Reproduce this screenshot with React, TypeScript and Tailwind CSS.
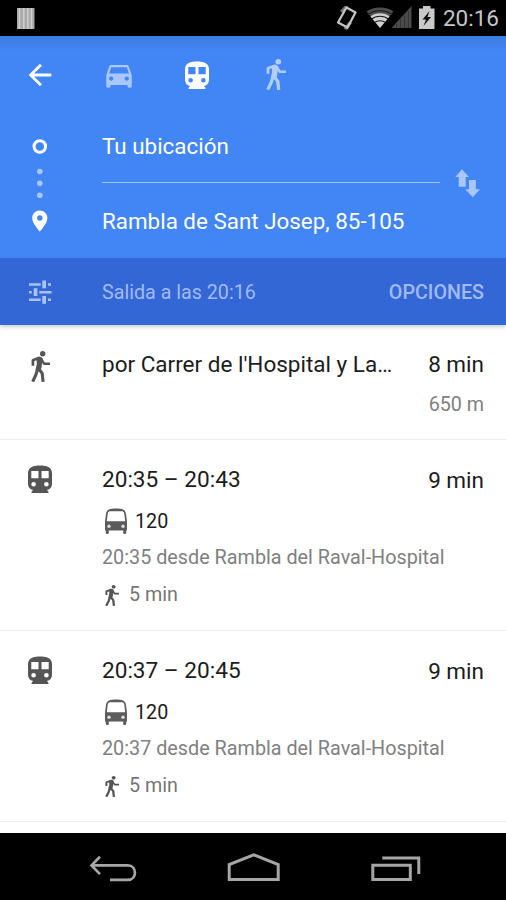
import type { ReactNode } from "react";

function WalkIcon({ className }: { className?: string }) {
  return (
    <svg viewBox="0 0 19 31" preserveAspectRatio="none" fill="none" stroke="currentColor" className={className}>
      <circle cx="11.700" cy="2.700" r="2.700" fill="currentColor" stroke="none" />
      <path strokeWidth="2.700" strokeLinejoin="round" d="M1.900 14.800V9.300L8.500 6.800" />
      <path strokeWidth="2.400" strokeLinejoin="round" d="M10 7.500l3 5.200h6" />
      <path fill="currentColor" stroke="none" d="M5.500 6.800c1.500-1.500 5-1.700 6.200.7l-1.200 9.300-1.200 3.200-4.800-1 1.300-6z" />
      <path strokeWidth="3.100" d="M6.800 17.500L5 23.500 1.700 30.700M7.500 17.500l3.700 4.800.9 8.500" />
    </svg>
  );
}

function TrainIcon({ className }: { className?: string }) {
  return (
    <svg viewBox="0 0 24 28" fill="currentColor" fillRule="evenodd" className={className}>
      <path d="M5.500 1.200C8 .2 16 .2 18.500 1.200 22 2.400 24 4.500 24 8v11c0 3-2 5.400-5 6l1.500 2v1h-17v-1L5 25c-3-.6-5-3-5-6V8C0 4.500 2 2.400 5.500 1.200zM3.300 6v7.300h7.200V6zM13.500 6v7.300h7.200V6zM5.600 17a2.300 2.300 0 1 0 0 4.600 2.300 2.300 0 0 0 0-4.600zM18.400 17a2.300 2.300 0 1 0 0 4.600 2.300 2.300 0 0 0 0-4.600z" />
    </svg>
  );
}

function BusIcon({ className }: { className?: string }) {
  return (
    <svg viewBox="0 0 22 26" className={className}>
      <path
        fill="#5c5c5c"
        fillRule="evenodd"
        d="M4 1.500C7 .3 15 .3 18 1.500c2 .8 2.700 2.200 3 4.500l1 7v9.500h-.8V25c0 1.300-3 1.300-3 0v-2.500H3.800V25c0 1.300-3 1.300-3 0v-2.500H0V13l1-7c.3-2.300 1-3.700 3-4.500zM4.500 3.200C3.200 3.700 2.900 4.500 2.700 6l-.9 7.300h18.400L19.300 6c-.2-1.500-.5-2.300-1.800-2.800z"
      />
      <circle cx="4" cy="18.300" r="1.700" fill="#ddd" />
      <circle cx="18" cy="18.300" r="1.700" fill="#ddd" />
    </svg>
  );
}

function StatusBar() {
  return (
    <div className="flex h-9 items-center bg-black pr-[7px] pl-[17px] text-[#c6c6c6]">
      <svg viewBox="0 0 18 21" className="h-[21px] w-[18px]">
        <path fill="#a9a9a9" d="M0 0h17.500v21H0z" />
        <path stroke="#d0d0d0" strokeWidth="1.500" d="M2.500 0v21M6.800 0v21M10.800 0v21M14.500 0v21" />
      </svg>
      <svg viewBox="336 5 99 26" className="ml-auto h-[26px] w-[99px]">
        <path fill="#777" d="M340 11l4.500-5 3.500.5-5 7zM352 23l-5 7-3.500-1.500 5.500-7z" />
        <path fill="none" stroke="#c6c6c6" strokeWidth="2.200" strokeLinejoin="round" d="M346.500 7.500l9 5-8 15-9.500-5z" />
        <path fill="#4d4d4d" d="M380 28L366.500 11.500c7-5.300 20-5.300 27 0z" />
        <path fill="#d0d0d0" d="M380 28l-9.500-11.500c5-4.200 14-4.200 19 0z" />
        <path fill="none" stroke="#1c1c1c" strokeWidth="1.100" d="M367.500 14.800c6.500-5.500 18.500-5.500 25 0M371.500 19.200c4.500-4 12.500-4 17 0M374.500 22.600c3-2.500 8-2.500 11 0" />
        <path fill="#4a4a4a" d="M411.500 6v22H391.500z" />
        <path stroke="#343434" strokeWidth="1" d="M396.500 24v4M400.500 19v9M404.500 15v13M408.500 11v17" />
        <path fill="#c9c9c9" d="M423 6h7.500v2.500h4V29h-15.500V8.500h4z" />
        <path fill="#111" d="M429.500 11l-7 8.500h3.500l-2.500 6.500 7.500-9h-3.500z" />
      </svg>
      <span className="ml-2 text-[22.5px] leading-9">20:16</span>
    </div>
  );
}

function Header() {
  return (
    <div className="h-[222px] bg-[#4285f4] text-white">
      <div className="flex h-[78px] items-center bg-linear-to-b from-[#3e7ce2] to-[#4285f4] to-20%">
        <svg viewBox="0 0 24 24" fill="currentColor" className="ml-[23px] size-[34px]">
          <path d="M20 11H7.830l5.590-5.590L12 4l-8 8 8 8 1.410-1.410L7.830 13H20v-2z" />
        </svg>
        <svg viewBox="0 0 24 24" fill="currentColor" className="ml-[45px] size-[34px] text-[#a9c7fb]">
          <path d="M18.920 6.010C18.720 5.420 18.160 5 17.500 5h-11c-.66 0-1.210.42-1.420 1.010L3 12v8c0 .55.45 1 1 1h1c.55 0 1-.45 1-1v-1h12v1c0 .55.45 1 1 1h1c.55 0 1-.45 1-1v-8l-2.080-5.990zM6.500 16c-.83 0-1.500-.67-1.500-1.500S5.670 13 6.500 13s1.500.67 1.500 1.500S7.330 16 6.500 16zm11 0c-.83 0-1.500-.67-1.500-1.500s.67-1.500 1.500-1.500 1.500.67 1.500 1.500-.67 1.500-1.500 1.500zM5 11l1.500-4.500h11L19 11H5z" />
        </svg>
        <TrainIcon className="ml-[49px] h-7 w-6" />
        <WalkIcon className="-mt-[2px] ml-[57px] h-[31px] w-5 text-[#b3cdfb]" />
      </div>
      <div className="flex">
        <svg viewBox="0 114 102 144" className="h-36 w-[102px] shrink-0">
          <circle cx="39.800" cy="146.500" r="5.800" fill="none" stroke="#fff" strokeWidth="3" />
          <g fill="#a9c7fb">
            <circle cx="39.800" cy="171.500" r="2.800" />
            <circle cx="39.800" cy="183.300" r="2.800" />
            <circle cx="39.800" cy="195.300" r="2.800" />
          </g>
          <path fill="#fff" fillRule="evenodd" d="M39.800 210.500c-4.200 0-7.600 3.300-7.600 7.500 0 5.600 7.600 13.500 7.600 13.500s7.600-7.900 7.600-13.500c0-4.200-3.400-7.500-7.600-7.500zm0 4.800a2.700 2.700 0 1 1 0 5.400 2.700 2.700 0 0 1 0-5.400z" />
        </svg>
        <div className="w-[338px] text-[22.4px] whitespace-nowrap">
          <div className="h-[69px] border-b border-[#a1c2fa] leading-[65px]">Tu ubicación</div>
          <div className="leading-[77px]">Rambla de Sant Josep, 85-105</div>
        </div>
        <svg viewBox="455 169 26 29" fill="#a9c7fb" className="mt-[55px] ml-[15px] h-[29px] w-[26px]">
          <path d="M462 169.300l7 7.700h-3.300v9.700h-7V177h-3.400zM469 180h6.800v9.300h4.200l-7.300 8-7.400-8h3.700z" />
        </svg>
      </div>
    </div>
  );
}

function OptionsBar() {
  return (
    <div className="flex h-[67px] items-center bg-[#3367d6] pr-[22px] pl-7 text-[19.7px] text-[#a1baf0] shadow-[0_2px_4px_rgba(0,0,0,0.2)]">
      <svg viewBox="28 280 24 24" fill="#a9c3f5" className="mr-[50px] size-6">
        <path d="M29 283.300h11.700v2.400H29zM42.300 280.500H46v7.800h-3.700zM48 283.300h3v2.400h-3zM29 291h2.700v2.400H29zM33.700 288.300h3.700v7.800h-3.700zM39.300 291h12.200v2.400H39.300zM29 298.500h11.700v2.400H29zM42.300 296H46v7.700h-3.700zM48 298.500h3v2.400h-3z" />
      </svg>
      <span className="pt-[2px]">Salida a las 20:16</span>
      <span className="ml-auto pt-[2px] font-medium">OPCIONES</span>
    </div>
  );
}

interface RowProps {
  icon: ReactNode;
  children: ReactNode;
  duration: ReactNode;
  className: string;
}

function Row({ icon, children, duration, className }: RowProps) {
  return (
    <div className={`flex shrink-0 border-b border-[#efefef] pr-[22px] ${className}`}>
      <div className="w-[102px] shrink-0 pl-7 text-[#555]">{icon}</div>
      <div className="min-w-0 whitespace-nowrap">{children}</div>
      <div className="ml-auto text-right text-[22.5px] leading-[40px] whitespace-nowrap text-[#1c1c1c]">{duration}</div>
    </div>
  );
}

function TransitRow({ from, to }: { from: string; to: string }) {
  return (
    <Row icon={<TrainIcon className="mt-[6px] h-7 w-6" />} duration={<div className="pt-px">9 min</div>} className="h-[191px] pt-[19px]">
      <div className="text-[22.6px] leading-[42px] text-[#1c1c1c]">
        {from} – {to}
      </div>
      <div className="flex h-10 items-center pl-[3px] text-[19.7px] text-[#1c1c1c]">
        <BusIcon className="mr-2 h-[26px] w-[22px]" />
        <span className="pt-[2px]">120</span>
      </div>
      <div className="text-[19.8px] leading-[34px] text-[#808080]">{from} desde Rambla del Raval-Hospital</div>
      <div className="flex h-10 items-center pl-[3px] text-[19.7px] text-[#757575]">
        <WalkIcon className="mr-[10px] h-[21px] w-[14px] text-[#555]" />
        5 min
      </div>
    </Row>
  );
}

function NavBar() {
  return (
    <div className="flex h-[67px] shrink-0 items-start justify-between bg-black px-[84px] pt-[18px]">
      <svg viewBox="84 851 58 36" fill="none" stroke="#a6a6a6" strokeWidth="2.700" className="h-9 w-[58px]">
        <path d="M100 856.700l-8.500 8.700 8.500 8.700M91.500 865.400h36.300c9.500 0 9.500 14.500 0 14.500H110" />
      </svg>
      <svg viewBox="224 851 60 36" fill="none" stroke="#a6a6a6" strokeWidth="3" className="mr-[3px] h-9 w-[60px]">
        <path d="M229.200 864.500v15h49v-15l-24.500-9.700z" />
      </svg>
      <svg viewBox="368 851 54 36" fill="none" stroke="#a6a6a6" strokeWidth="3" className="h-9 w-[54px]">
        <path d="M372.800 865.200h37.500v14.300h-37.500zM382.300 857.900h36.500V874" />
      </svg>
    </div>
  );
}

export default function App() {
  return (
    <div className="flex h-[900px] w-[506px] flex-col overflow-hidden bg-white font-[Roboto,sans-serif]">
      <StatusBar />
      <Header />
      <OptionsBar />
      <Row
        icon={<WalkIcon className="mt-[7px] ml-[3px] h-[31px] w-[19px]" />}
        duration={
          <>
            <div>8 min</div>
            <div className="pt-px text-[19.7px] text-[#808080]">650 m</div>
          </>
        }
        className="h-[115px] pt-[19px]"
      >
        <div className="w-[292px] truncate text-[22.5px] leading-[40px] text-[#1c1c1c]">por Carrer de l'Hospital y La...</div>
      </Row>
      <TransitRow from="20:35" to="20:43" />
      <TransitRow from="20:37" to="20:45" />
      <div className="h-[11px] shrink-0" />
      <NavBar />
    </div>
  );
}
